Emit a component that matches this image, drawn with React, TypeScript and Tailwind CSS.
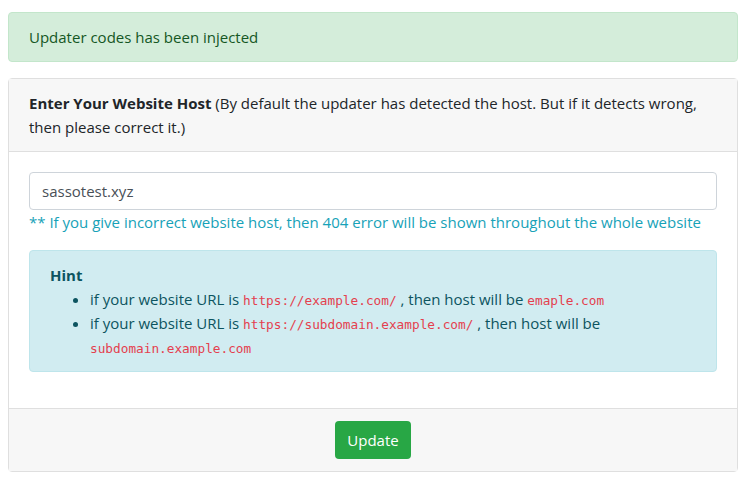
import React from 'react';

const Code: React.FC<{ children: React.ReactNode }> = ({ children }) => (
  <code className="font-['DejaVu_Sans_Mono',monospace] text-[12.75px] leading-none text-[#e4404e]">{children}</code>
);

export default function App() {
  return (
    <div className="min-h-screen bg-white pt-3 pl-2 font-['Open_Sans',sans-serif] text-[15px] leading-6 text-[#212529]">
      <div className="w-[730px]">
        <div className="mb-4 rounded border border-[#c3e6cb] bg-[#d4edda] px-5 py-3 text-[#155724]">
          Updater codes has been injected
        </div>

        <div className="rounded border border-[#dfdfdf] bg-white">
          <div className="border-b border-[#dfdfdf] bg-[#f7f7f7] px-5 py-3">
            <b className="font-bold">Enter Your Website Host</b> (By default the updater has detected the host. But if it detects
            wrong, then please correct it.)
          </div>

          <div className="p-5">
            <input
              defaultValue="sassotest.xyz"
              className="block h-[38px] w-full rounded border border-[#ced4da] px-3 text-[#495057] outline-none"
            />
            <div className="text-[#17a2b8]">
              ** If you give incorrect website host, then 404 error will be shown throughout the whole website
            </div>

            <div className="mt-4 mb-4 rounded border border-[#bee5eb] bg-[#d1ecf1] px-5 py-3 text-[#0c5460]">
              <div className="font-bold">Hint</div>
              <ul className="list-disc pl-10">
                <li>
                  if your website URL is <Code>https://example.com/</Code> , then host will be <Code>emaple.com</Code>
                </li>
                <li>
                  if your website URL is <Code>https://subdomain.example.com/</Code> , then host will be{' '}
                  <Code>subdomain.example.com</Code>
                </li>
              </ul>
            </div>
          </div>

          <div className="flex justify-center border-t border-[#dfdfdf] bg-[#f7f7f7] px-5 py-3">
            <button className="h-[38px] rounded bg-[#28a745] px-3 text-white">Update</button>
          </div>
        </div>
      </div>
    </div>
  );
}
